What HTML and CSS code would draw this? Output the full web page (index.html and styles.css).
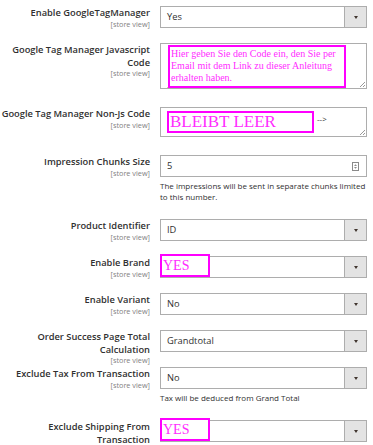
FILE: index.html
```html
<!DOCTYPE html>
<html lang="de">
<head>
    <meta charset="UTF-8">
    <meta name="viewport" content="width=device-width, initial-scale=1.0">
    <title>GoogleTagManager Konfiguration</title>
    <link rel="stylesheet" href="styles.css">
</head>
<body>
    <div class="config">
        <div class="row">
            <div class="label">
                <span class="name">Enable GoogleTagManager</span>
                <span class="scope">[store view]</span>
            </div>
            <div class="control">
                <div class="select"><span class="value">Yes</span><span class="arrow"></span></div>
            </div>
        </div>

        <div class="row">
            <div class="label">
                <span class="name">Google Tag Manager Javascript<br>Code</span>
                <span class="scope">[store view]</span>
            </div>
            <div class="control">
                <div class="textarea textarea-tall">
                    <div class="code code-tall">j=d.createElement(s),dl=l!='dataLayer'?'&amp;l='+l:'';j.async=true;j.src=</div>
                    <div class="mark mark-text">Hier geben Sie den Code ein, den Sie per Email mit dem Link zu dieser Anleitung erhalten haben.</div>
                    <span class="grip"></span>
                </div>
            </div>
        </div>

        <div class="row">
            <div class="label">
                <span class="name">Google Tag Manager Non-Js Code</span>
                <span class="scope">[store view]</span>
            </div>
            <div class="control">
                <div class="textarea textarea-short">
                    <div class="code code-short"><span class="tail">--&gt;</span><br>&lt;noscript&gt;&lt;iframe src="https://www.googletagmanager.com/ns.html?id=GTM"</div>
                    <div class="mark mark-big">BLEIBT LEER</div>
                    <span class="grip"></span>
                </div>
            </div>
        </div>

        <div class="row">
            <div class="label">
                <span class="name">Impression Chunks Size</span>
                <span class="scope">[store view]</span>
            </div>
            <div class="control">
                <div class="input">
                    <span class="value">5</span>
                    <svg class="spin" width="7" height="9" viewBox="0 0 7 9">
                        <rect x="0.5" y="0.5" width="6" height="8" fill="#fff" stroke="#8a8a8a"/>
                        <path d="M2 4L3.5 2.3 5 4z M2 5L3.5 6.7 5 5z" fill="#8a8a8a"/>
                    </svg>
                </div>
                <p class="note">The impressions will be sent in separate chunks limited to this number.</p>
            </div>
        </div>

        <div class="row">
            <div class="label">
                <span class="name">Product Identifier</span>
                <span class="scope">[store view]</span>
            </div>
            <div class="control">
                <div class="select"><span class="value">ID</span><span class="arrow"></span></div>
            </div>
        </div>

        <div class="row">
            <div class="label">
                <span class="name">Enable Brand</span>
                <span class="scope">[store view]</span>
            </div>
            <div class="control">
                <div class="select"><span class="value"></span><span class="arrow"></span><span class="mark mark-yes">YES</span></div>
            </div>
        </div>

        <div class="row">
            <div class="label">
                <span class="name">Enable Variant</span>
                <span class="scope">[store view]</span>
            </div>
            <div class="control">
                <div class="select"><span class="value">No</span><span class="arrow"></span></div>
            </div>
        </div>

        <div class="row">
            <div class="label">
                <span class="name">Order Success Page Total<br>Calculation</span>
                <span class="scope">[store view]</span>
            </div>
            <div class="control">
                <div class="select"><span class="value">Grandtotal</span><span class="arrow"></span></div>
            </div>
        </div>

        <div class="row">
            <div class="label">
                <span class="name">Exclude Tax From Transaction</span>
                <span class="scope">[store view]</span>
            </div>
            <div class="control">
                <div class="select"><span class="value">No</span><span class="arrow"></span></div>
                <p class="note">Tax will be deduced from Grand Total</p>
            </div>
        </div>

        <div class="row">
            <div class="label">
                <span class="name">Exclude Shipping From<br>Transaction</span>
                <span class="scope">[store view]</span>
            </div>
            <div class="control">
                <div class="select"><span class="value"></span><span class="arrow"></span><span class="mark mark-yes">YES</span></div>
            </div>
        </div>
    </div>
</body>
</html>
```

FILE: styles.css
```css
:root {
    --text: #303030;
    --muted: #808080;
    --border: #adadad;
    --button-bg: #e3e3e3;
    --magenta: #ff00ff;
    --magenta-text: #ff2cff;
}

* {
    margin: 0;
    padding: 0;
    box-sizing: border-box;
}

body {
    font-family: "Open Sans", "Liberation Sans", sans-serif;
    color: var(--text);
    background: #ffffff;
}

.config {
    padding-top: 6px;
}

.row {
    display: grid;
    grid-template-columns: 150px 207px;
    column-gap: 10px;
    margin-bottom: 15px;
}

.label {
    text-align: right;
    font-size: 9.3px;
    font-weight: 600;
    line-height: 12.5px;
    padding-top: 1px;
    margin-bottom: -16px;
}

.name {
    display: block;
}

.scope {
    display: block;
    font-size: 7.3px;
    font-weight: 400;
    line-height: 9px;
    color: var(--muted);
}

/* selects */
.select {
    position: relative;
    display: flex;
    height: 22px;
    border: 1px solid var(--border);
    background: #ffffff;
}

.value {
    flex: 1;
    padding-left: 6px;
    font-size: 9.3px;
    line-height: 20px;
}

.arrow {
    width: 22px;
    border-left: 1px solid var(--border);
    background: var(--button-bg);
    display: flex;
    align-items: center;
    justify-content: center;
}

.arrow::after {
    content: "";
    border-left: 2.5px solid transparent;
    border-right: 2.5px solid transparent;
    border-top: 3px solid #41362f;
}

/* input */
.input {
    display: flex;
    align-items: center;
    height: 22px;
    border: 1px solid var(--border);
    padding-right: 7px;
}

.note {
    margin-top: 3px;
    padding-bottom: 2px;
    font-size: 8px;
    line-height: 11px;
}

/* textareas */
.textarea {
    position: relative;
    border: 1px solid var(--border);
    overflow: hidden;
    margin-bottom: 3px;
}

.textarea-tall {
    height: 46px;
}

.textarea-short {
    height: 30px;
}

.code {
    font-size: 7px;
    color: #303030;
    white-space: nowrap;
    overflow: hidden;
}

.code-tall {
    width: 184px;
    padding: 41px 0 0 6px;
    line-height: 9px;
}

.code-short {
    padding: 1px 0 0 6px;
    line-height: 19px;
}

.tail {
    margin-left: 150px;
    font-size: 8px;
}

.grip {
    position: absolute;
    right: 1px;
    bottom: 1px;
    width: 5px;
    height: 5px;
    background: linear-gradient(135deg, transparent 45%, #9a9a9a 45%, #9a9a9a 55%, transparent 55%, transparent 75%, #9a9a9a 75%, #9a9a9a 85%, transparent 85%);
}

/* magenta annotation boxes */
.mark {
    position: absolute;
    border: 2px solid var(--magenta);
    background: #ffffff;
    color: var(--magenta-text);
    font-family: "Liberation Serif", "Times New Roman", serif;
}

.mark-text {
    left: 7px;
    top: 1px;
    width: 178px;
    height: 43px;
    font-size: 10px;
    line-height: 12px;
    padding: 1px 0 0 1px;
}

.mark-big {
    left: 6px;
    top: 3px;
    width: 147px;
    height: 22px;
    font-size: 17px;
    line-height: 18px;
    padding-left: 1px;
}

.mark-yes {
    left: -1px;
    top: -3px;
    width: 50px;
    height: 23px;
    font-size: 14px;
    line-height: 19px;
    padding-left: 1px;
}
```
